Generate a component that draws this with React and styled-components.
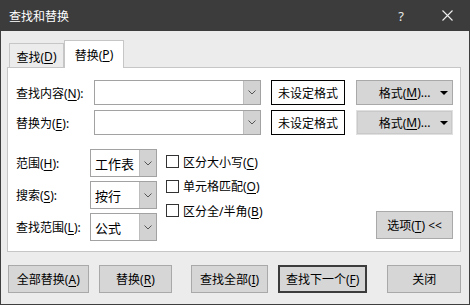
import React from 'react';
import styled, { createGlobalStyle } from 'styled-components';

const GlobalStyle = createGlobalStyle`
  html, body {
    margin: 0;
    padding: 0;
    background: #ececec;
  }
  body {
    font-family: "Noto Sans", "Noto Sans CJK SC", sans-serif;
    font-size: 12px;
    color: #000;
  }
  u {
    text-decoration-thickness: 1px;
    text-underline-offset: 2px;
  }
`;

const Window = styled.div`
  width: 470px;
  height: 305px;
  box-sizing: border-box;
  border: 1px solid #3f3f3f;
  border-top: none;
  background: #ececec;
  display: flex;
  flex-direction: column;
`;

const TitleBar = styled.div`
  height: 31px;
  background: #3c3c3c;
  color: #fff;
  display: flex;
  align-items: center;
  padding-left: 8px;
  margin: 0 -1px;
  font-size: 12px;
`;

const Title = styled.div`
  flex: 1;
  padding-left: 1px;
`;

const TitleButton = styled.div`
  width: 46px;
  height: 31px;
  display: flex;
  align-items: center;
  justify-content: center;
  color: #e8e8e8;
  font-size: 13px;
`;

const Body = styled.div`
  padding: 9px 8px 0 6px;
  display: flex;
  flex-direction: column;
`;

const TabStrip = styled.div`
  display: flex;
  align-items: flex-end;
  padding-left: 2px;
  height: 27px;
  position: relative;
  z-index: 1;
`;

const Tab = styled.div`
  box-sizing: border-box;
  width: ${p => (p.$active ? '60px' : '55px')};
  height: ${p => (p.$active ? '28px' : '24px')};
  margin-bottom: ${p => (p.$active ? '-1px' : '0')};
  background: ${p => (p.$active ? '#fff' : '#ececec')};
  border: 1px solid #c6c6c6;
  border-bottom: none;
  display: flex;
  align-items: center;
  justify-content: center;
  padding-top: ${p => (p.$active ? '0' : '2px')};
`;

const Panel = styled.div`
  box-sizing: border-box;
  height: 185px;
  background: #fff;
  border: 1px solid #c6c6c6;
  padding: 12px 7px 10px 8px;
  display: flex;
  flex-direction: column;
`;

const FieldRow = styled.div`
  display: grid;
  grid-template-columns: 68px 167px 74px 97px;
  column-gap: 10px;
  align-items: center;
  height: 25px;
  margin-bottom: 5px;
  & > :nth-child(4) {
    margin-left: 1px;
  }
`;

const Label = styled.div`
  white-space: nowrap;
`;

const Combo = styled.div`
  box-sizing: border-box;
  height: ${p => p.$h || 25}px;
  border: 1px solid #a2a2a2;
  background: #fff;
  display: flex;
  align-items: stretch;
`;

const ComboText = styled.div`
  flex: 1;
  display: flex;
  align-items: center;
  padding-left: 4px;
  font-size: 13px;
`;

const ComboArrow = styled.div`
  width: 16px;
  background: #d2d2d2;
  border-left: 1px solid #bdbdbd;
  display: flex;
  align-items: center;
  justify-content: center;
`;

const FormatBox = styled.div`
  box-sizing: border-box;
  height: 25px;
  border: 1px solid #000;
  display: flex;
  align-items: center;
  justify-content: center;
`;

const Button = styled.div`
  box-sizing: border-box;
  width: ${p => p.$w}px;
  height: ${p => p.$h || 28}px;
  margin-left: ${p => p.$ml || 0}px;
  background: #d6d6d6;
  border: ${p => (p.$default ? '2px solid #3c3c3c' : '1px solid #a9a9a9')};
  display: flex;
  align-items: center;
  justify-content: center;
  white-space: nowrap;
`;

const FormatButton = styled(Button)`
  position: relative;
  border-color: ${p => (p.$faint ? '#e0e0e0' : '#a9a9a9')};
  outline: ${p => (p.$faint ? '1px solid #c9c9c9' : 'none')};
  outline-offset: -2px;
`;

const Caret = styled.span`
  position: absolute;
  right: 4px;
  top: 10px;
  width: 0;
  height: 0;
  border-left: 4px solid transparent;
  border-right: 4px solid transparent;
  border-top: 4px solid #000;
`;

const Lower = styled.div`
  display: flex;
  margin-top: 9px;
  flex: 1;
`;

const OptionGrid = styled.div`
  display: grid;
  grid-template-columns: 74px 67px;
  row-gap: 4px;
  align-items: center;
  align-content: start;
`;

const Checks = styled.div`
  display: flex;
  flex-direction: column;
  padding-top: 6px;
  margin-left: 9px;
`;

const CheckRow = styled.div`
  display: flex;
  align-items: center;
  height: 13px;
  margin-bottom: 11.5px;
  gap: 4px;
`;

const Box = styled.span`
  box-sizing: border-box;
  width: 13px;
  height: 13px;
  border: 1px solid #333;
  background: #fff;
`;

const Spacer = styled.div`
  flex: 1;
  display: flex;
  align-items: flex-end;
  justify-content: flex-end;
  padding-bottom: 2px;
`;

const Footer = styled.div`
  display: flex;
  margin-top: 13px;
  padding-left: 1px;
`;

const Chevron = () => (
  <svg width="8" height="5" viewBox="0 0 8 5">
    <path d="M0.5 0.5 L4 4 L7.5 0.5" fill="none" stroke="#555" strokeWidth="1" />
  </svg>
);

const Close = () => (
  <svg width="11" height="11" viewBox="0 0 11 11">
    <path d="M0.5 0.5 L10.5 10.5 M10.5 0.5 L0.5 10.5" stroke="#f0f0f0" strokeWidth="1.1" />
  </svg>
);

const ComboBox = ({ text, h }) => (
  <Combo $h={h}>
    <ComboText>{text}</ComboText>
    <ComboArrow><Chevron /></ComboArrow>
  </Combo>
);

const Check = ({ children }) => (
  <CheckRow>
    <Box />
    <span>{children}</span>
  </CheckRow>
);

const App = () => (
  <>
    <GlobalStyle />
    <Window>
      <TitleBar>
        <Title>查找和替换</Title>
        <TitleButton>?</TitleButton>
        <TitleButton><Close /></TitleButton>
      </TitleBar>
      <Body>
        <TabStrip>
          <Tab>查找(<u>D</u>)</Tab>
          <Tab $active>替换(<u>P</u>)</Tab>
        </TabStrip>
        <Panel>
          <FieldRow>
            <Label>查找内容(<u>N</u>):</Label>
            <ComboBox />
            <FormatBox>未设定格式</FormatBox>
            <FormatButton $w={97} $h={25}>格式(<u>M</u>)...<Caret /></FormatButton>
          </FieldRow>
          <FieldRow>
            <Label>替换为(<u>E</u>):</Label>
            <ComboBox />
            <FormatBox>未设定格式</FormatBox>
            <FormatButton $w={97} $h={25} $faint>格式(<u>M</u>)...<Caret /></FormatButton>
          </FieldRow>
          <Lower>
            <OptionGrid>
              <Label>范围(<u>H</u>):</Label>
              <ComboBox text="工作表" h={28} />
              <Label>搜索(<u>S</u>):</Label>
              <ComboBox text="按行" h={28} />
              <Label>查找范围(<u>L</u>):</Label>
              <ComboBox text="公式" h={28} />
            </OptionGrid>
            <Checks>
              <Check>区分大小写(<u>C</u>)</Check>
              <Check>单元格匹配(<u>O</u>)</Check>
              <Check>区分全/半角(<u>B</u>)</Check>
            </Checks>
            <Spacer>
              <Button $w={77}>选项(<u>T</u>) &lt;&lt;</Button>
            </Spacer>
          </Lower>
        </Panel>
        <Footer>
          <Button $w={81}>全部替换(<u>A</u>)</Button>
          <Button $w={74} $ml={10}>替换(<u>R</u>)</Button>
          <Button $w={77} $ml={19}>查找全部(<u>I</u>)</Button>
          <Button $w={90} $ml={10} $default>查找下一个(<u>F</u>)</Button>
          <Button $w={74} $ml={20}>关闭</Button>
        </Footer>
      </Body>
    </Window>
  </>
);

export default App;
